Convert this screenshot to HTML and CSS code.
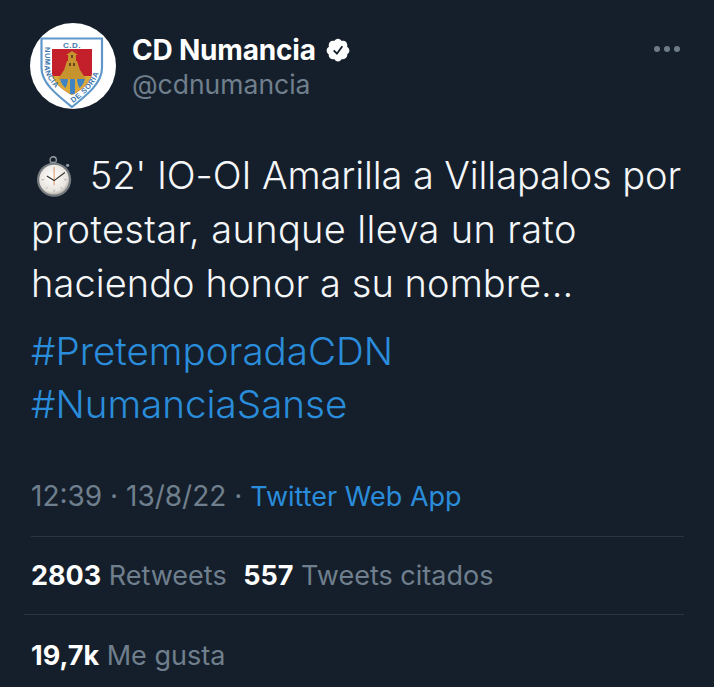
FILE: index.html
```html
<!DOCTYPE html>
<html lang="es">
<head>
<meta charset="utf-8">
<title>CD Numancia</title>
<link rel="stylesheet" href="styles.css">
</head>
<body>
<main class="tweet">
  <header class="head">
    <div class="avatar">
      <svg viewBox="0 0 86 86" width="86" height="86">
        <defs>
          <clipPath id="panel"><path d="M22 26H62V50C62 58 52 67 42 72C32 67 22 58 22 50Z"/></clipPath>
          <path id="arcLeft" d="M14.500 24V45C15 54 23 63 34 73"/>
          <path id="arcRight" d="M43 80C55 71 68 60 69.500 45V24"/>
        </defs>
        <circle cx="43" cy="43" r="43" fill="#fff"/>
        <path d="M11.500 15.500H72V45C72 60 57 72 42 84C27 72 11.500 60 11.500 45Z" fill="#fff" stroke="#5f97c9" stroke-width="2.200"/>
        <g clip-path="url(#panel)">
          <rect x="22" y="26" width="40" height="48" fill="#c4202c"/>
          <path d="M22 53H62V74H22Z" fill="#d9a93a"/>
          <path d="M28 56L34 47L37 38H47L50 47L56 56Z" fill="#c6932e"/>
          <path d="M38 38V32H36L42 28L48 32H46V38Z" fill="#c6932e"/>
          <path d="M41 32H43V35H41ZM39 40H41V43H39ZM43 40H45V43H43Z" fill="#6b451c"/>
          <path d="M30 56C31 60 33 63 35.500 65C37 62 38 59 38 56ZM40 56V71H45V56ZM47 56C47 59 48 62 49.500 65C52 63 54 60 55 56Z" fill="#3f83c2"/>
        </g>
        <text class="crest crest-top" x="42" y="24.500" text-anchor="middle">C.D.</text>
        <text class="crest"><textPath href="#arcLeft">NUMANCIA</textPath></text>
        <text class="crest"><textPath href="#arcRight">DE SORIA</textPath></text>
      </svg>
    </div>
    <div class="identity">
      <div class="name-row">
        <span class="name">CD Numancia</span>
        <svg class="badge" viewBox="0 0 24 24" width="26" height="26">
          <path fill="#fff" d="M22.500 12.500c0-1.580-.875-2.950-2.148-3.600.154-.435.238-.905.238-1.400 0-2.210-1.710-3.998-3.818-3.998-.47 0-.92.084-1.336.25C14.818 2.415 13.520 1.500 12 1.500s-2.816.917-3.437 2.250c-.415-.165-.866-.25-1.336-.25-2.110 0-3.818 1.790-3.818 4 0 .494.083.964.237 1.400-1.272.65-2.147 2.018-2.147 3.600 0 1.495.782 2.798 1.942 3.486-.02.17-.032.34-.032.514 0 2.210 1.708 4 3.818 4 .47 0 .92-.086 1.335-.25.62 1.334 1.916 2.250 3.437 2.250 1.520 0 2.816-.916 3.437-2.250.415.163.865.248 1.336.248 2.110 0 3.818-1.790 3.818-4 0-.174-.012-.344-.033-.513 1.158-.687 1.943-1.990 1.943-3.484z"/>
          <path fill="none" stroke="#15202b" stroke-width="1.700" d="M8 12.400l3 3 5-6.800"/>
        </svg>
      </div>
      <div class="handle">@cdnumancia</div>
    </div>
    <div class="more" aria-label="Más"><i></i><i></i><i></i></div>
  </header>

  <section class="body">
    <p class="text">
      <svg class="watch" viewBox="0 0 40 46" width="36" height="42">
        <defs>
          <radialGradient id="face" cx=".45" cy=".4" r=".65">
            <stop offset="0" stop-color="#fff"/><stop offset=".75" stop-color="#e8e4de"/><stop offset="1" stop-color="#a8a39c"/>
          </radialGradient>
        </defs>
        <circle cx="18" cy="4" r="3.500" fill="none" stroke="#9aa0a6" stroke-width="1.400"/>
        <rect x="16" y="6" width="4" height="4" fill="#a9adb1"/>
        <circle cx="34" cy="10" r="1.800" fill="#8c98a4"/>
        <circle cx="19" cy="26" r="19" fill="#777c80"/>
        <circle cx="19" cy="26" r="16.500" fill="url(#face)"/>
        <path d="M19 12V32" stroke="#d98b55" stroke-width="1"/>
        <path d="M11 22L19 27L31 18" fill="none" stroke="#33302c" stroke-width="1.300"/>
        <path d="M19 37V40M5 26H8M30 26H33M10 36L12 34M28 36L26 34" stroke="#aaa" stroke-width="1"/>
      </svg>
      <span class="line-one">52' IO-OI Amarilla a Villapalos por</span><br>
      <span class="line-two">protestar, aunque lleva un rato</span><br>
      <span class="line-three">haciendo honor a su nombre...</span>
    </p>
    <p class="tags"><a>#PretemporadaCDN</a><br><a>#NumanciaSanse</a></p>
  </section>

  <div class="meta">12:39 · 13/8/22 · <a>Twitter Web App</a></div>
  <div class="stat stat-first"><b>2803</b> Retweets <b class="second">557</b> Tweets citados</div>
  <div class="stat stat-last"><b>19,7k</b> Me gusta</div>
</main>
</body>
</html>
```

FILE: styles.css
```css
* { box-sizing: border-box; }
html, body { margin: 0; height: 100%; }
body {
  background: #151f2b;
  color: #f2f5f7;
  font-family: Inter, "Liberation Sans", sans-serif;
  overflow: hidden;
}
.tweet { padding: 23px 30px 0 31px; }
.head { display: flex; align-items: flex-start; }
.avatar { width: 86px; height: 86px; flex: none; margin-left: -1px; margin-right: 1px; }
.avatar svg { display: block; }
.crest { font: 700 7.500px "Liberation Sans", sans-serif; fill: #4278ad; letter-spacing: .5px; }
.crest-top { font-size: 8px; }
.identity { margin-left: 15px; padding-top: 11px; }
.name-row { display: flex; align-items: center; gap: 9px; height: 32px; }
.name { font-size: 28px; font-weight: 700; color: #fff; letter-spacing: -.2px; }
.handle { font-size: 26.500px; color: #707f8d; line-height: 32px; margin-top: 2px; }
.more { display: flex; gap: 4px; margin-left: auto; margin-top: 23px; margin-right: 4px; }
.more i { width: 6px; height: 6px; border-radius: 50%; background: #6d7a87; }
.body { margin-top: 39px; }
.text { margin: 0; font-size: 38px; line-height: 54px; font-weight: 300; color: #f4f6f8; white-space: nowrap; }
.line-one { letter-spacing: -.09px; }
.line-two { letter-spacing: .36px; }
.line-three { letter-spacing: .07px; }
.watch { vertical-align: -9px; margin-left: 6px; margin-right: 6px; }
.tags { margin: 15px 0 0; font-size: 38.600px; line-height: 53px; font-weight: 300; }
.tags a, .meta a { color: #2a8ddb; }
.meta { margin-top: 49px; font-size: 28px; line-height: 32px; color: #707f8d; padding-bottom: 23px; border-bottom: 1px solid #2a3541; }
.meta a { font-size: 27px; }
.stat { font-size: 27px; line-height: 32px; color: #707f8d; }
.stat b { color: #fff; font-weight: 700; }
.stat .second { margin-left: 9px; }
.stat-first { padding: 23px 0 22px 7px; margin-left: -7px; border-bottom: 1px solid #2a3541; }
.stat-last { padding-top: 25px; }
```
